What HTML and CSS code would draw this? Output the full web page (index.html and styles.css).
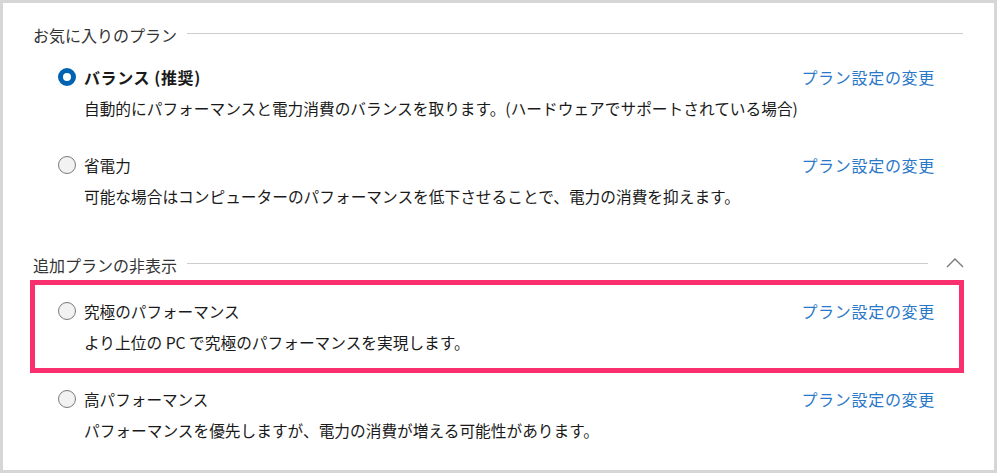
FILE: index.html
```html
<!DOCTYPE html>
<html>
<head>
    <title>電源プラン</title>
    <link rel="stylesheet" href="styles.css">
</head>
<body>
    <div class="panel">
        <div class="group-head">
            <span class="group-title">お気に入りのプラン</span>
            <span class="rule"></span>
        </div>

        <div class="item">
            <span class="radio checked"></span>
            <span class="name bold">バランス (推奨)</span>
            <a class="link" href="#">プラン設定の変更</a>
            <span class="desc">自動的にパフォーマンスと電力消費のバランスを取ります。(ハードウェアでサポートされている場合)</span>
        </div>

        <div class="item">
            <span class="radio"></span>
            <span class="name">省電力</span>
            <a class="link" href="#">プラン設定の変更</a>
            <span class="desc">可能な場合はコンピューターのパフォーマンスを低下させることで、電力の消費を抑えます。</span>
        </div>

        <div class="group-head second">
            <span class="group-title">追加プランの非表示</span>
            <span class="rule short"></span>
            <svg class="chevron" width="18" height="11" viewBox="0 0 18 11">
                <path d="M1 10 L9 2 L17 10" fill="none" stroke="#7a7a7a" stroke-width="1.4"/>
            </svg>
        </div>

        <div class="item highlighted">
            <span class="radio"></span>
            <span class="name">究極のパフォーマンス</span>
            <a class="link" href="#">プラン設定の変更</a>
            <span class="desc">より上位の PC で究極のパフォーマンスを実現します。</span>
        </div>

        <div class="item">
            <span class="radio"></span>
            <span class="name">高パフォーマンス</span>
            <a class="link" href="#">プラン設定の変更</a>
            <span class="desc">パフォーマンスを優先しますが、電力の消費が増える可能性があります。</span>
        </div>
    </div>
</body>
</html>
```

FILE: styles.css
```css
body {
    margin: 0;
    background-color: white;
    font-family: "Noto Sans CJK JP", "Noto Sans", sans-serif;
    font-size: 16px;
    color: #1a1a1a;
}

.panel {
    width: 997px;
    height: 473px;
    box-sizing: border-box;
    border: 3px solid #d6d6d6;
    padding: 20px 30px 0 27px;
    overflow: hidden;
}

.group-head {
    display: flex;
    align-items: center;
    height: 24px;
    padding-left: 3px;
    margin-bottom: 1px;
}

.group-head.second {
    margin-top: 29px;
    margin-bottom: 5px;
}

.group-title {
    color: #333;
    line-height: 24px;
}

.rule {
    flex: 1;
    height: 1px;
    background-color: #cdcdcd;
    margin-left: 10px;
    margin-top: -3px;
    margin-right: 1px;
}

.rule.short {
    margin-right: 18px;
}

.chevron {
    margin-top: -6px;
}

.item {
    display: grid;
    grid-template-columns: 18px 1fr auto;
    column-gap: 8px;
    row-gap: 8px;
    align-items: center;
    border: 5px solid transparent;
    padding: 12px 24px 10px 23px;
    line-height: 24px;
}

.item.highlighted {
    border-color: #fa2f6d;
    margin: -2px 0 -3px;
    padding-top: 14px;
    padding-bottom: 13px;
}

.radio {
    width: 18px;
    height: 18px;
    box-sizing: border-box;
    border-radius: 50%;
    border: 1.5px solid #7a7a7a;
    background-color: #f2f2f2;
}

.radio.checked {
    border: 5px solid #0063b1;
    background-color: white;
}

.name {
    font-size: 15.6px;
}

.name.bold {
    font-size: 16px;
    font-weight: bold;
    letter-spacing: 0.6px;
}

.link {
    color: #2a78c8;
    text-decoration: none;
    letter-spacing: 0.7px;
}

.desc {
    grid-column: 2 / 4;
    font-size: 15.7px;
}
```
